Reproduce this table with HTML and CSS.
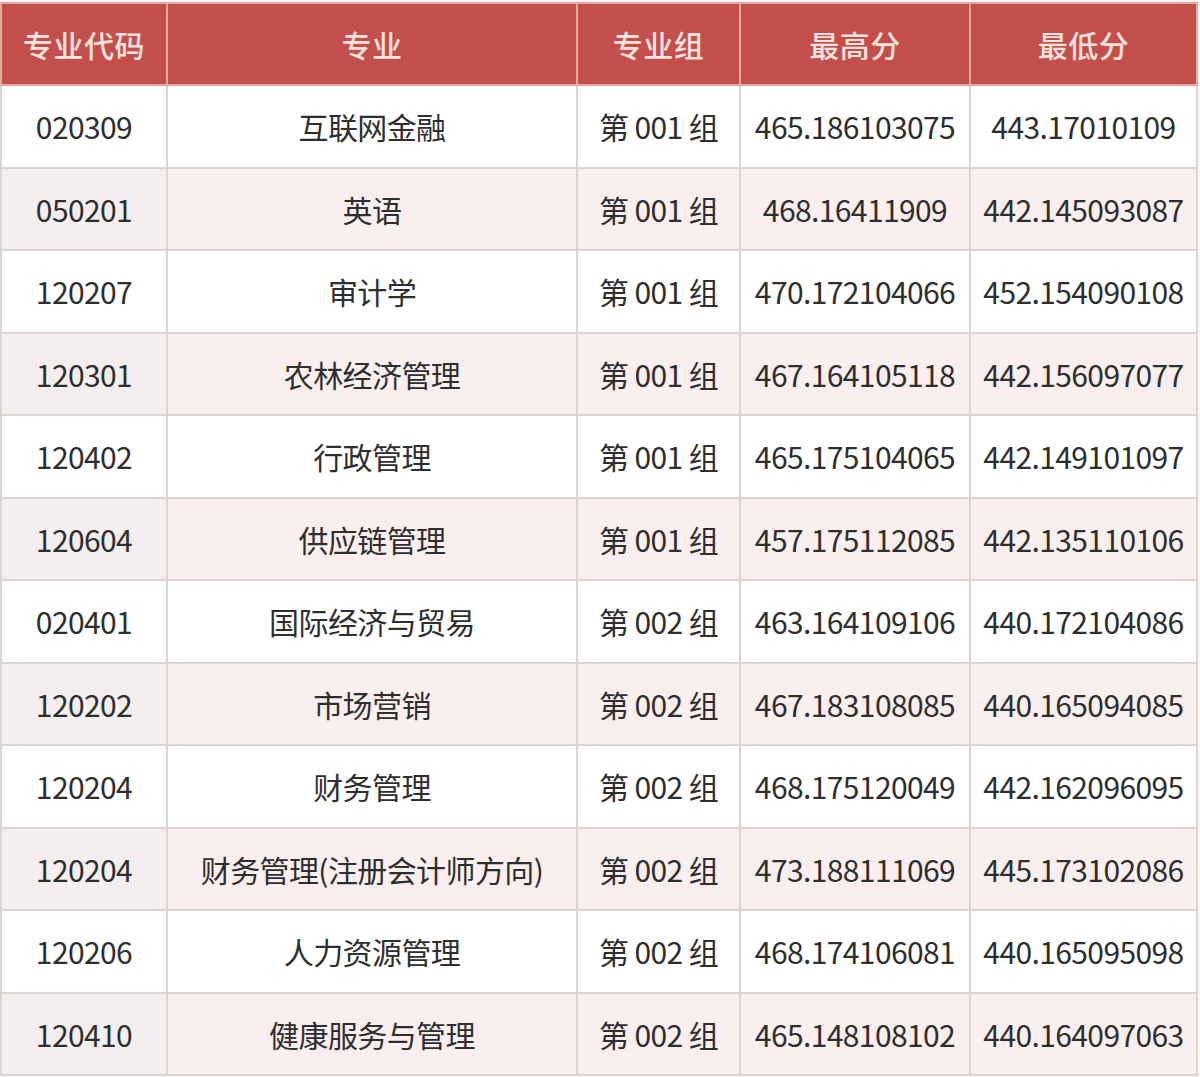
FILE: index.html
```html
<!DOCTYPE html>
<html lang="zh">
<head>
<meta charset="utf-8">
<link rel="stylesheet" href="styles.css">
</head>
<body>
<table class="scores">
  <colgroup>
    <col class="c1"><col class="c2"><col class="c3"><col class="c4"><col class="c5">
  </colgroup>
  <thead>
    <tr><th>专业代码</th><th>专业</th><th>专业组</th><th>最高分</th><th>最低分</th></tr>
  </thead>
  <tbody>
    <tr><td>020309</td><td>互联网金融</td><td>第 001 组</td><td>465.186103075</td><td>443.17010109</td></tr>
    <tr><td>050201</td><td>英语</td><td>第 001 组</td><td>468.16411909</td><td>442.145093087</td></tr>
    <tr><td>120207</td><td>审计学</td><td>第 001 组</td><td>470.172104066</td><td>452.154090108</td></tr>
    <tr><td>120301</td><td>农林经济管理</td><td>第 001 组</td><td>467.164105118</td><td>442.156097077</td></tr>
    <tr><td>120402</td><td>行政管理</td><td>第 001 组</td><td>465.175104065</td><td>442.149101097</td></tr>
    <tr><td>120604</td><td>供应链管理</td><td>第 001 组</td><td>457.175112085</td><td>442.135110106</td></tr>
    <tr><td>020401</td><td>国际经济与贸易</td><td>第 002 组</td><td>463.164109106</td><td>440.172104086</td></tr>
    <tr><td>120202</td><td>市场营销</td><td>第 002 组</td><td>467.183108085</td><td>440.165094085</td></tr>
    <tr><td>120204</td><td>财务管理</td><td>第 002 组</td><td>468.175120049</td><td>442.162096095</td></tr>
    <tr><td>120204</td><td>财务管理(注册会计师方向)</td><td>第 002 组</td><td>473.188111069</td><td>445.173102086</td></tr>
    <tr><td>120206</td><td>人力资源管理</td><td>第 002 组</td><td>468.174106081</td><td>440.165095098</td></tr>
    <tr><td>120410</td><td>健康服务与管理</td><td>第 002 组</td><td>465.148108102</td><td>440.164097063</td></tr>
  </tbody>
</table>
</body>
</html>
```

FILE: styles.css
```css
html, body {
  margin: 0;
  padding: 0;
  background: #fdf6f6;
}
body {
  padding-top: 2px;
  font-family: "Noto Sans CJK SC", "Noto Sans", sans-serif;
}
.scores {
  width: 1196px;
  border-collapse: collapse;
  table-layout: fixed;
  background: #ffffff;
}
.c1 { width: 166px; }
.c2 { width: 410px; }
.c3 { width: 163px; }
.c4 { width: 230px; }
.c5 { width: 227px; }
.scores th {
  height: 80px;
  background: #c24f4c;
  color: #fbe2de;
  font-size: 30px;
  font-weight: 500;
  border: 2px solid #e9a7a2;
  padding: 0;
  text-align: center;
  letter-spacing: 0.5px;
}
.scores td {
  height: 80.5px;
  padding: 0;
  border: 2px solid #dcd3d3;
  text-align: center;
  font-size: 30px;
  color: #2e2e2e;
  letter-spacing: -0.6px;
  white-space: nowrap;
}
.scores tbody tr:nth-child(even) td {
  background: #fbeeee;
}
.scores tbody tr:nth-child(even) td:first-child {
  background: #f5eeee;
}
```
